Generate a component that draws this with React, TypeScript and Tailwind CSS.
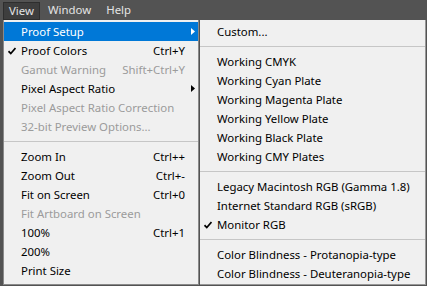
import React from 'react'

type Item =
  | { sep: true }
  | {
      sep?: false
      label: string
      shortcut?: string
      checked?: boolean
      disabled?: boolean
      sub?: boolean
      active?: boolean
    }

const viewItems: Item[] = [
  { label: 'Proof Setup', sub: true, active: true },
  { label: 'Proof Colors', shortcut: 'Ctrl+Y', checked: true },
  { label: 'Gamut Warning', shortcut: 'Shift+Ctrl+Y', disabled: true },
  { label: 'Pixel Aspect Ratio', sub: true },
  { label: 'Pixel Aspect Ratio Correction', disabled: true },
  { label: '32-bit Preview Options...', disabled: true },
  { sep: true },
  { label: 'Zoom In', shortcut: 'Ctrl++' },
  { label: 'Zoom Out', shortcut: 'Ctrl+-' },
  { label: 'Fit on Screen', shortcut: 'Ctrl+0' },
  { label: 'Fit Artboard on Screen', disabled: true },
  { label: '100%', shortcut: 'Ctrl+1' },
  { label: '200%' },
  { label: 'Print Size' },
]

const proofItems: Item[] = [
  { label: 'Custom...' },
  { sep: true },
  { label: 'Working CMYK' },
  { label: 'Working Cyan Plate' },
  { label: 'Working Magenta Plate' },
  { label: 'Working Yellow Plate' },
  { label: 'Working Black Plate' },
  { label: 'Working CMY Plates' },
  { sep: true },
  { label: 'Legacy Macintosh RGB (Gamma 1.8)' },
  { label: 'Internet Standard RGB (sRGB)' },
  { label: 'Monitor RGB', checked: true },
  { sep: true },
  { label: 'Color Blindness - Protanopia-type' },
  { label: 'Color Blindness - Deuteranopia-type' },
]

function Check({ white }: { white?: boolean }) {
  return (
    <svg width="8" height="8" viewBox="0 0 8 8" className={white ? 'text-white' : 'text-black'}>
      <path d="M0.5 4.2 L2.8 6.6 L7.5 1" fill="none" stroke="currentColor" strokeWidth="1.7" />
    </svg>
  )
}

function MenuList({ items }: { items: Item[] }) {
  return (
    <div className="flex flex-col pt-[2px]">
      {items.map((item, i) => {
        if (item.sep) {
          return (
            <div key={i} className="h-[11px] flex items-center">
              <div className="h-px w-full bg-[#c6c6c6]" />
            </div>
          )
        }
        const color = item.active
          ? 'bg-[#0078d7] text-white'
          : item.disabled
          ? 'text-[#9b9b9b]'
          : 'text-black'
        return (
          <div key={i} className={`relative h-[19px] flex items-center pl-[17px] pr-[13px] ${color}`}>
            {item.checked && (
              <span className="absolute left-[4px] top-[6px]">
                <Check white={item.active} />
              </span>
            )}
            <span className="flex-1 whitespace-nowrap">{item.label}</span>
            {item.shortcut && <span className="whitespace-nowrap">{item.shortcut}</span>}
            {item.sub && (
              <svg width="4" height="7" viewBox="0 0 4 7" className="absolute right-[3px] top-[6px]">
                <path d="M0 0 L4 3.5 L0 7 Z" fill={item.active ? '#ffffff' : '#000000'} />
              </svg>
            )}
          </div>
        )
      })}
    </div>
  )
}

export default function App() {
  return (
    <div
      className="w-[427px] h-[286px] bg-[#535353] overflow-hidden text-[11.4px] leading-none"
      style={{ fontFamily: '"Noto Sans", "Open Sans", sans-serif' }}
    >
      {/* menu bar */}
      <div className="h-[20px] flex items-center pl-[3px] text-[#e4e4e4]">
        <div className="h-[18px] w-[37px] mt-[2px] flex items-center justify-center bg-[#3e3e3e] border border-[#2e2e2e]">
          View
        </div>
        <div className="ml-[8px] mr-[15px]">Window</div>
        <div>Help</div>
      </div>

      <div className="flex items-start pl-[3px]">
        {/* View menu */}
        <div className="w-[196px] h-[265px] bg-[#f0f0f0] border border-[#8a8a8a] border-t-0">
          <MenuList items={viewItems} />
        </div>
        {/* Proof Setup submenu */}
        <div className="w-[226px] h-[265px] ml-[1px] bg-[#f0f0f0] border border-[#979797] border-t-0 border-l-0">
          <MenuList items={proofItems} />
        </div>
      </div>
    </div>
  )
}
